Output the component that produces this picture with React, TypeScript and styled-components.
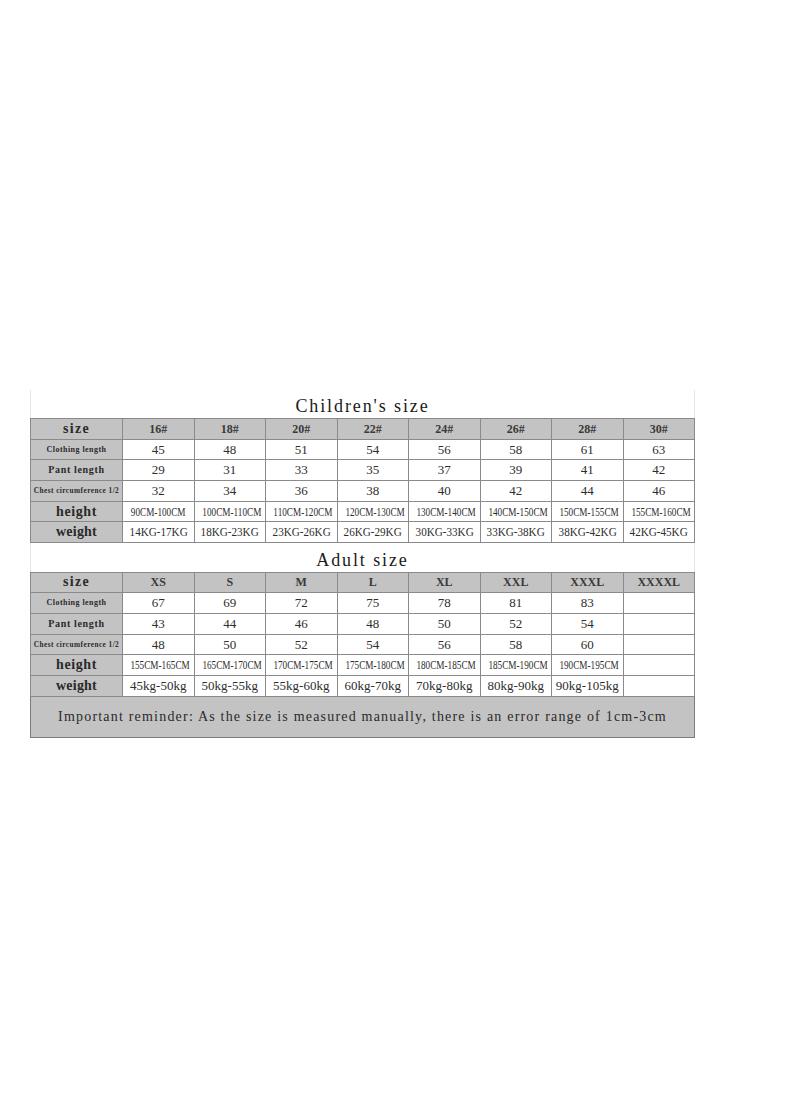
import React from "react"
import styled, { createGlobalStyle } from "styled-components"

const Global = createGlobalStyle`
  html, body {
    margin: 0;
    padding: 0;
    background: #fff;
  }
`

const Page = styled.div`
  width: 800px;
  height: 1096px;
  padding-top: 390px;
  padding-left: 30px;
  box-sizing: border-box;
`

const Table = styled.table`
  width: 665px;
  table-layout: fixed;
  border-collapse: collapse;
  color: #222;
  font-family: "Liberation Serif", serif;
`

const TitleCell = styled.td<{ $tall?: boolean }>`
  height: ${p => (p.$tall ? 28 : 28.5)}px;
  padding: 0;
  text-align: center;
  vertical-align: bottom;
  border-left: 1px solid #e4e4e4;
  border-right: 1px solid #e4e4e4;
  border-bottom: 1px solid #8a8a8a;
  font-size: 18px;
  letter-spacing: 1.9px;
  line-height: 24px;
  color: #1a1a1a;
`

const Cell = styled.td<{ $gray?: boolean }>`
  height: 19.7px;
  padding: 0;
  overflow: hidden;
  text-align: center;
  vertical-align: middle;
  white-space: nowrap;
  background: ${p => (p.$gray ? "#c3c3c3" : "#fff")};
  border: 1px solid #8a8a8a;
  font-size: 13px;
  line-height: 18px;
  color: #2e2e2e;
`

const HeadCell = styled(Cell)`
  font-weight: bold;
  font-size: 12px;
  color: #3a3a3a;
`

const LabelCell = styled(Cell)<{ $size: number; $ls: number }>`
  font-weight: bold;
  font-size: ${p => p.$size}px;
  letter-spacing: ${p => p.$ls}px;
  color: #2a2a2a;
`

const ReminderCell = styled.td`
  height: 40px;
  padding: 0;
  text-align: center;
  vertical-align: middle;
  white-space: nowrap;
  background: #c3c3c3;
  border: 1px solid #7a7a7a;
  font-size: 14px;
  letter-spacing: 1.2px;
  color: #2a2a2a;
`

const Fit = styled.span<{ $x: number; $size: number }>`
  display: inline-block;
  font-size: ${p => p.$size}px;
  transform: scaleX(${p => p.$x});
  transform-origin: center;
  white-space: nowrap;
`

type Row = { label: string; size: number; ls: number; values: string[]; fit?: number; fs?: number }

const children = {
  title: "Children's size",
  head: ["16#", "18#", "20#", "22#", "24#", "26#", "28#", "30#"],
  rows: [
    { label: "Clothing length", size: 8, ls: 0.45, values: ["45", "48", "51", "54", "56", "58", "61", "63"] },
    { label: "Pant length", size: 10, ls: 0.65, values: ["29", "31", "33", "35", "37", "39", "41", "42"] },
    { label: "Chest circumference 1/2", size: 7.3, ls: 0.45, values: ["32", "34", "36", "38", "40", "42", "44", "46"] },
    {
      label: "height", size: 14, ls: 0.6, fit: 0.8, fs: 11.5,
      values: ["90CM-100CM", "100CM-110CM", "110CM-120CM", "120CM-130CM", "130CM-140CM", "140CM-150CM", "150CM-155CM", "155CM-160CM"],
    },
    {
      label: "weight", size: 14, ls: 0.2, fit: 0.89, fs: 12.5,
      values: ["14KG-17KG", "18KG-23KG", "23KG-26KG", "26KG-29KG", "30KG-33KG", "33KG-38KG", "38KG-42KG", "42KG-45KG"],
    },
  ] as Row[],
}

const adults = {
  title: "Adult size",
  head: ["XS", "S", "M", "L", "XL", "XXL", "XXXL", "XXXXL"],
  rows: [
    { label: "Clothing length", size: 8, ls: 0.45, values: ["67", "69", "72", "75", "78", "81", "83", ""] },
    { label: "Pant length", size: 10, ls: 0.65, values: ["43", "44", "46", "48", "50", "52", "54", ""] },
    { label: "Chest circumference 1/2", size: 7.3, ls: 0.45, values: ["48", "50", "52", "54", "56", "58", "60", ""] },
    {
      label: "height", size: 14, ls: 0.6, fit: 0.8, fs: 11.5,
      values: ["155CM-165CM", "165CM-170CM", "170CM-175CM", "175CM-180CM", "180CM-185CM", "185CM-190CM", "190CM-195CM", ""],
    },
    {
      label: "weight", size: 14, ls: 0.2, fit: 1, fs: 13,
      values: ["45kg-50kg", "50kg-55kg", "55kg-60kg", "60kg-70kg", "70kg-80kg", "80kg-90kg", "90kg-105kg", ""],
    },
  ] as Row[],
}

const Section = ({ data, tall }: { data: typeof children; tall?: boolean }) => (
  <>
    <tr>
      <TitleCell colSpan={9} $tall={tall}>
        {data.title}
      </TitleCell>
    </tr>
    <tr>
      <LabelCell $gray $size={14} $ls={1.3}>
        size
      </LabelCell>
      {data.head.map(h => (
        <HeadCell $gray key={h}>
          {h}
        </HeadCell>
      ))}
    </tr>
    {data.rows.map(r => (
      <tr key={r.label}>
        <LabelCell $gray $size={r.size} $ls={r.ls}>
          {r.label}
        </LabelCell>
        {r.values.map((v, i) => (
          <Cell key={i}>
            {r.fit ? <Fit $x={r.fit} $size={r.fs || 13}>{v}</Fit> : v}
          </Cell>
        ))}
      </tr>
    ))}
  </>
)

export default function App() {
  return (
    <Page>
      <Global />
      <Table>
        <colgroup>
          <col style={{ width: 92 }} />
          {Array.from({ length: 8 }).map((_, i) => (
            <col key={i} />
          ))}
        </colgroup>
        <tbody>
          <Section data={children} tall />
          <Section data={adults} />
          <tr>
            <ReminderCell colSpan={9}>
              Important reminder: As the size is measured manually, there is an error range of 1cm-3cm
            </ReminderCell>
          </tr>
        </tbody>
      </Table>
    </Page>
  )
}
